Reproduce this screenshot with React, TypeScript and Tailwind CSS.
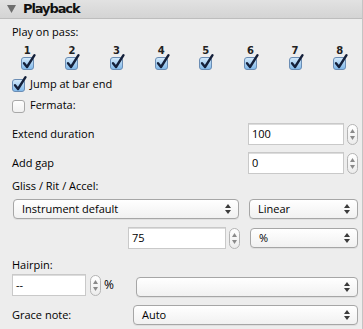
import React from "react";

const font = { fontFamily: '"Open Sans", "DejaVu Sans", sans-serif' };
const headFont = { fontFamily: '"DejaVu Sans", sans-serif' };

function CheckOn() {
  return (
    <svg width="16" height="17" viewBox="0 0 16 17" className="block overflow-visible">
      <defs>
        <linearGradient id="cbg" x1="0" y1="0" x2="0" y2="1">
          <stop offset="0" stopColor="#d6ebfb" />
          <stop offset="0.5" stopColor="#a9d0f2" />
          <stop offset="1" stopColor="#7fb8ea" />
        </linearGradient>
      </defs>
      <rect x="1.5" y="3.5" width="12" height="12" rx="2.5" fill="url(#cbg)" stroke="#6b8db4" />
      <path d="M4 9.3 L7 13 L14.5 1.2" fill="none" stroke="#14203a" strokeWidth="2.4" strokeLinecap="round" strokeLinejoin="round" />
    </svg>
  );
}

function CheckOff() {
  return (
    <svg width="16" height="17" viewBox="0 0 16 17" className="block">
      <defs>
        <linearGradient id="cbw" x1="0" y1="0" x2="0" y2="1">
          <stop offset="0" stopColor="#ffffff" />
          <stop offset="1" stopColor="#f0f0f0" />
        </linearGradient>
      </defs>
      <rect x="1.5" y="3.5" width="12" height="12" rx="2.5" fill="url(#cbw)" stroke="#a8a8a8" />
    </svg>
  );
}

function Spinner() {
  return (
    <div className="w-[11px] h-[21px] rounded-full border border-[#b4b4b4] bg-gradient-to-b from-[#ffffff] to-[#ececec] flex flex-col items-center justify-center gap-[3px] shrink-0">
      <svg width="5" height="4" viewBox="0 0 5 4"><path d="M2.5 0 L5 4 L0 4 Z" fill="#8a8a8a" /></svg>
      <svg width="5" height="4" viewBox="0 0 5 4"><path d="M0 0 L5 0 L2.5 4 Z" fill="#8a8a8a" /></svg>
    </div>
  );
}

function Arrows() {
  return (
    <div className="flex flex-col items-center gap-[2px] shrink-0">
      <svg width="6" height="4" viewBox="0 0 6 4"><path d="M3 0 L6 4 L0 4 Z" fill="#3a3a3a" /></svg>
      <svg width="6" height="4" viewBox="0 0 6 4"><path d="M0 0 L6 0 L3 4 Z" fill="#3a3a3a" /></svg>
    </div>
  );
}

function Combo({ text, className }: { text?: string; className: string }) {
  return (
    <div
      className={
        "h-[20px] rounded-[4px] border border-[#a6a6a6] bg-gradient-to-b from-[#ffffff] to-[#f1f1f1] shadow-[0_1px_0_rgba(0,0,0,0.06)] flex items-center pl-[8px] pr-[7px] " +
        className
      }
    >
      <span className="flex-1 text-[11px] text-black">{text}</span>
      <Arrows />
    </div>
  );
}

function Input({ text, className }: { text: string; className: string }) {
  return (
    <div
      className={
        "h-[22px] bg-white border border-[#c9c9c9] shadow-[inset_0_1px_0_#dcdcdc] flex items-center pl-[3px] text-[11px] text-black " +
        className
      }
    >
      {text}
    </div>
  );
}

export default function App() {
  const passes = [1, 2, 3, 4, 5, 6, 7, 8];
  return (
    <div style={font} className="w-[363px] h-[329px] bg-[#ededed] text-black text-[11px] overflow-hidden border-r border-[#c4c4c4]">
      <div className="h-[19px] bg-gradient-to-b from-[#e2e2e2] to-[#d4d4d4] border-b border-[#bdbdbd] flex items-center pl-[7px]">
        <svg width="9" height="8" viewBox="0 0 9 8" className="mr-[7px]">
          <path d="M0 0 L9 0 L4.5 8 Z" fill="#6e6e6e" />
        </svg>
        <span style={headFont} className="font-bold text-[13px] tracking-[-1.1px] text-[#111]">Playback</span>
      </div>

      <div className="pl-[12px] mt-[6px] h-[14px] leading-[14px]">Play on pass:</div>

      <div className="grid grid-cols-8 pl-[5px] mt-[6px]">
        {passes.map((p) => (
          <div key={p} className="flex flex-col items-center">
            <div style={headFont} className="text-[10px] leading-[11px] font-bold text-[#222]">{p}</div>
            <div className="-mt-[2px] ml-[1px]">
              <CheckOn />
            </div>
          </div>
        ))}
      </div>

      <div className="flex items-center pl-[11px] mt-[5px] h-[17px]">
        <CheckOn />
        <span className="ml-[3px]">Jump at bar end</span>
      </div>

      <div className="flex items-center pl-[11px] mt-[4px] h-[17px]">
        <CheckOff />
        <span className="ml-[3px]">Fermata:</span>
      </div>

      <div className="flex items-center pl-[12px] pr-[4px] mt-[9px] h-[22px]">
        <span className="flex-1">Extend duration</span>
        <Input text="100" className="w-[96px]" />
        <div className="ml-[3px]"><Spinner /></div>
      </div>

      <div className="flex items-center pl-[12px] pr-[4px] mt-[7px] h-[22px]">
        <span className="flex-1">Add gap</span>
        <Input text="0" className="w-[96px]" />
        <div className="ml-[3px]"><Spinner /></div>
      </div>

      <div className="pl-[12px] mt-[5px] h-[14px] leading-[14px]">Gliss / Rit / Accel:</div>

      <div className="flex items-center pl-[13px] pr-[4px] mt-[6px]">
        <Combo text="Instrument default" className="w-[226px]" />
        <Combo text="Linear" className="ml-[10px] flex-1" />
      </div>

      <div className="flex items-center pl-[128px] pr-[4px] mt-[8px] h-[22px]">
        <Input text="75" className="w-[98px]" />
        <div className="ml-[3px]"><Spinner /></div>
        <Combo text="%" className="ml-[10px] flex-1" />
      </div>

      <div className="pl-[12px] mt-[9px] h-[14px] leading-[14px]">Hairpin:</div>

      <div className="flex items-center pl-[12px] pr-[4px] mt-[2px] h-[22px]">
        <Input text="--" className="w-[74px]" />
        <div className="ml-[4px]"><Spinner /></div>
        <span className="ml-[3px] w-[32px] text-[12px]">%</span>
        <Combo className="flex-1 mt-[3px]" />
      </div>

      <div className="flex items-center pl-[12px] pr-[4px] mt-[9px] h-[20px]">
        <span className="w-[121px]">Grace note:</span>
        <Combo text="Auto" className="flex-1" />
      </div>
    </div>
  );
}
